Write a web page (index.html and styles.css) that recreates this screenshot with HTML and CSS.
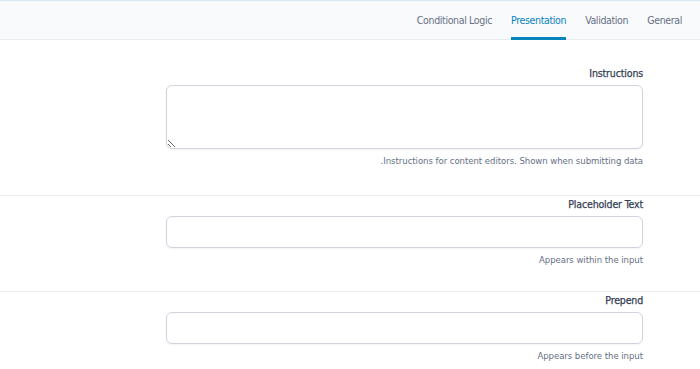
FILE: index.html
```html
<!DOCTYPE html>
<html dir="rtl">
<head>
<meta charset="utf-8">
<link rel="stylesheet" href="styles.css">
</head>
<body>
<div class="settings">
  <nav class="tabs">
    <a class="tab">General</a>
    <a class="tab">Validation</a>
    <a class="tab active">Presentation</a>
    <a class="tab">Conditional Logic</a>
  </nav>
  <div class="field first">
    <label class="label">Instructions</label>
    <textarea class="textarea"></textarea>
    <p class="help">Instructions for content editors. Shown when submitting data.</p>
  </div>
  <div class="field">
    <label class="label">Placeholder Text</label>
    <input class="input" type="text">
    <p class="help">Appears within the input</p>
  </div>
  <div class="field">
    <label class="label">Prepend</label>
    <input class="input" type="text">
    <p class="help">Appears before the input</p>
  </div>
</div>
</body>
</html>
```

FILE: styles.css
```css
html, body {
  margin: 0;
  padding: 0;
  background: #ffffff;
}
body {
  font-family: "DejaVu Sans Condensed", "DejaVu Sans", "Liberation Sans", sans-serif;
  color: #344054;
}
.settings {
  width: 700px;
}
.tabs {
  display: flex;
  flex-direction: row;
  gap: 19px;
  height: 38px;
  padding: 0 18px 0 0;
  background: #f9fafb;
  border-top: 1px solid #dbe8f4;
  border-bottom: 1px solid #eaecf0;
  box-sizing: content-box;
}
.tab {
  display: flex;
  align-items: center;
  height: 35px;
  padding-top: 1px;
  font-size: 10.5px;
  letter-spacing: -0.35px;
  color: #667085;
  border-bottom: 3px solid transparent;
  margin-bottom: -1px;
}
.tab.active {
  color: #0783be;
  border-bottom-color: #0783be;
}
.field {
  display: flex;
  flex-direction: column;
  align-items: stretch;
  padding: 2px 57px 25px 166px;
  border-top: 1px solid #eaecf0;
}
.field.first {
  border-top: none;
  padding-top: 27px;
  padding-bottom: 28px;
}
.label {
  display: block;
  font-size: 10.5px;
  line-height: 12px;
  font-weight: normal;
  letter-spacing: -0.15px;
  -webkit-text-stroke: 0.25px #344054;
  color: #344054;
  text-align: right;
  margin-bottom: 6px;
}
.textarea, .input {
  display: block;
  box-sizing: border-box;
  width: 100%;
  margin: 0;
  border: 1px solid #d0d5dd;
  border-radius: 6px;
  background: #ffffff;
  box-shadow: 0 1px 2px rgba(16, 24, 40, 0.05);
  font: inherit;
}
.textarea {
  height: 64px;
  resize: vertical;
}
.input {
  height: 32px;
}
.help {
  margin: 6px 0 0;
  font-size: 9.5px;
  line-height: 12px;
  letter-spacing: -0.05px;
  color: #667085;
  text-align: right;
}
```
